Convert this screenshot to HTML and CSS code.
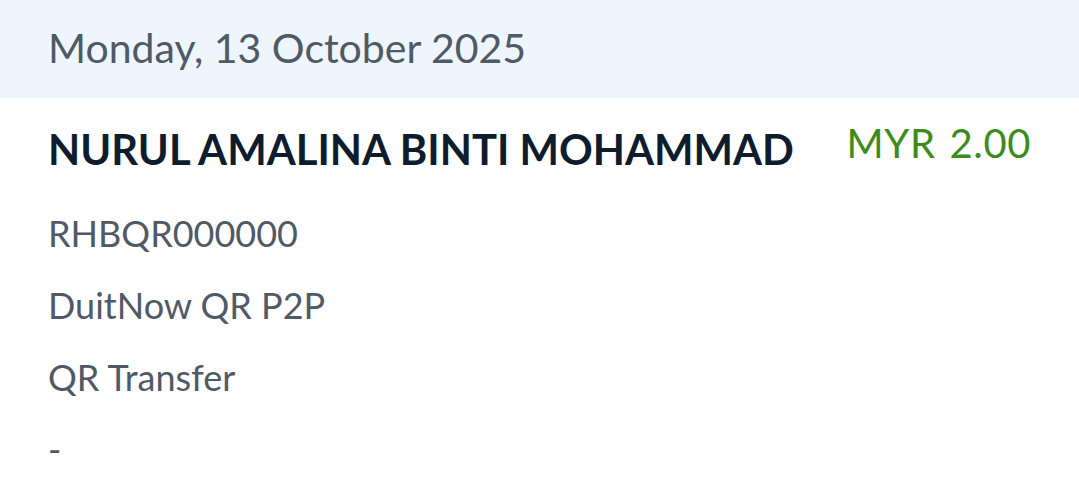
FILE: index.html
```html
<!DOCTYPE html>
<html>
<head>
<meta charset="utf-8">
<link rel="stylesheet" href="styles.css">
</head>
<body>
<div class="date-bar">Monday, 13 October 2025</div>
<div class="txn">
  <div class="txn-head">
    <div class="name">NURUL AMALINA BINTI MOHAMMAD</div>
    <div class="amount"><span class="cur">MYR</span><span>2.00</span></div>
  </div>
  <div class="details">
    <div class="line">RHBQR000000</div>
    <div class="line">DuitNow QR P2P</div>
    <div class="line">QR Transfer</div>
    <div class="line">-</div>
  </div>
</div>
</body>
</html>
```
FILE: styles.css
```css
html, body {
  margin: 0;
  padding: 0;
  background: #ffffff;
  font-family: Lato, "Noto Sans", sans-serif;
}
.date-bar {
  background: #eef5fc;
  height: 98px;
  box-sizing: border-box;
  padding-left: 48px;
  display: flex;
  align-items: center;
  padding-bottom: 4px;
  font-size: 41px;
  color: #4f5a66;
}
.txn {
  padding: 0 48px;
}
.txn-head {
  display: flex;
  justify-content: space-between;
  align-items: flex-start;
  padding-top: 21px;
}
.name {
  margin-top: 5px;
  font-weight: 700;
  font-size: 41.8px;
  line-height: 1.2;
  color: #0e1c2e;
}
.amount {
  font-size: 40px;
  line-height: 1.2;
  letter-spacing: 0.6px;
  color: #3b8c1c;
  display: flex;
  gap: 14px;
}
.details {
  padding-top: 23px;
  display: flex;
  flex-direction: column;
}
.line {
  font-size: 36px;
  line-height: 72px;
  color: #4f5a66;
}
```
